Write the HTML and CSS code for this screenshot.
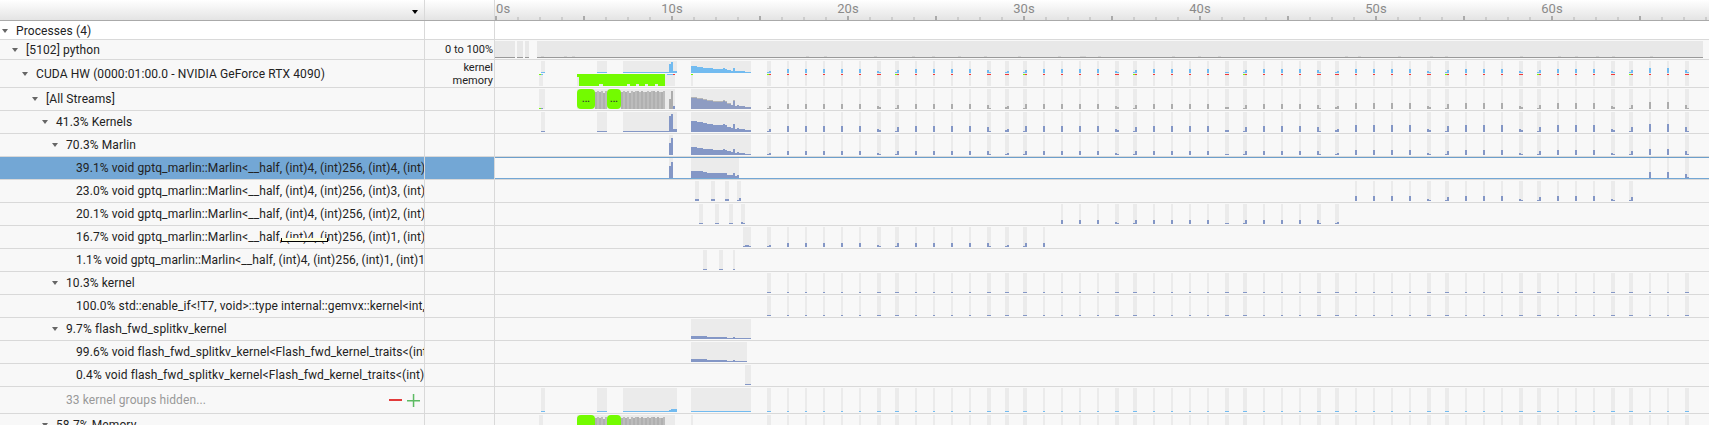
FILE: index.html
```html
<!DOCTYPE html>
<html lang="en">
<head>
  <meta charset="UTF-8">
  <title>Processes timeline</title>
  <link rel="stylesheet" href="styles.css">
</head>
<body>
<div class="header">
  <div class="name-cell"><span class="sort-arrow"></span></div>
  <div class="scale-cell"></div>
  <div class="track" id="axis"></div>
</div>

<div class="row top">
  <div class="name-cell l0"><i class="tw"></i>Processes (4)</div>
  <div class="scale-cell"></div>
  <div class="track"></div>
</div>
<div class="row h20">
  <div class="name-cell l1"><i class="tw"></i>[5102] python</div>
  <div class="scale-cell">0 to 100%</div>
  <div class="track" data-track="python"></div>
</div>
<div class="row h28">
  <div class="name-cell l2"><i class="tw"></i>CUDA HW (0000:01:00.0 - NVIDIA GeForce RTX 4090)</div>
  <div class="scale-cell">kernel<br>memory</div>
  <div class="track" data-track="cuda"></div>
</div>
<div class="row">
  <div class="name-cell l3"><i class="tw"></i>[All Streams]</div>
  <div class="scale-cell"></div>
  <div class="track" data-track="streams"></div>
</div>
<div class="row">
  <div class="name-cell l4"><i class="tw"></i>41.3% Kernels</div>
  <div class="scale-cell"></div>
  <div class="track" data-track="kernels"></div>
</div>
<div class="row">
  <div class="name-cell l5"><i class="tw"></i>70.3% Marlin</div>
  <div class="scale-cell"></div>
  <div class="track" data-track="marlin"></div>
</div>
<div class="row selected">
  <div class="name-cell l6">39.1% void gptq_marlin::Marlin&lt;__half, (int)4, (int)256, (int)4, (int)</div>
  <div class="scale-cell"></div>
  <div class="track" data-track="m4"></div>
</div>
<div class="row">
  <div class="name-cell l6">23.0% void gptq_marlin::Marlin&lt;__half, (int)4, (int)256, (int)3, (int)</div>
  <div class="scale-cell"></div>
  <div class="track" data-track="m3"></div>
</div>
<div class="row">
  <div class="name-cell l6">20.1% void gptq_marlin::Marlin&lt;__half, (int)4, (int)256, (int)2, (int)</div>
  <div class="scale-cell"></div>
  <div class="track" data-track="m2"></div>
</div>
<div class="row">
  <div class="name-cell l6">16.7% void gptq_marlin::Marlin&lt;__half, (int)4, (int)256, (int)1, (int)<span class="tooltip-sliver"></span></div>
  <div class="scale-cell"></div>
  <div class="track" data-track="m1"></div>
</div>
<div class="row">
  <div class="name-cell l6">1.1% void gptq_marlin::Marlin&lt;__half, (int)4, (int)256, (int)1, (int)1</div>
  <div class="scale-cell"></div>
  <div class="track" data-track="m0"></div>
</div>
<div class="row">
  <div class="name-cell l5"><i class="tw"></i>10.3% kernel</div>
  <div class="scale-cell"></div>
  <div class="track" data-track="thin"></div>
</div>
<div class="row">
  <div class="name-cell l6">100.0% std::enable_if&lt;!T7, void&gt;::type internal::gemvx::kernel&lt;int,</div>
  <div class="scale-cell"></div>
  <div class="track" data-track="thin"></div>
</div>
<div class="row">
  <div class="name-cell l5"><i class="tw"></i>9.7% flash_fwd_splitkv_kernel</div>
  <div class="scale-cell"></div>
  <div class="track" data-track="flash"></div>
</div>
<div class="row">
  <div class="name-cell l6">99.6% void flash_fwd_splitkv_kernel&lt;Flash_fwd_kernel_traits&lt;(int)</div>
  <div class="scale-cell"></div>
  <div class="track" data-track="flash1"></div>
</div>
<div class="row">
  <div class="name-cell l6">0.4% void flash_fwd_splitkv_kernel&lt;Flash_fwd_kernel_traits&lt;(int)1</div>
  <div class="scale-cell"></div>
  <div class="track" data-track="flash2"></div>
</div>
<div class="row h27">
  <div class="name-cell l5 hidden-groups">
    <i class="tw none"></i>33 kernel groups hidden...
    <span class="expanders">
      <svg width="13" height="2" viewBox="0 0 13 2"><rect width="13" height="2" fill="#e23a3a"/></svg>
      <svg width="13" height="13" viewBox="0 0 13 13"><path d="M0 6h13v1.500H0zM5.800 0h1.500v13H5.800z" fill="#5dbb63"/></svg>
    </span>
  </div>
  <div class="scale-cell"></div>
  <div class="track" data-track="hidden"></div>
</div>
<div class="row">
  <div class="name-cell l4"><i class="tw"></i>58.7% Memory</div>
  <div class="scale-cell"></div>
  <div class="track" data-track="memory"></div>
</div>
<script src="chart.js"></script>
</body>
</html>
```

FILE: styles.css
```css
* {
  box-sizing: border-box;
}

html, body {
  height: 100%;
}

body {
  margin: 0;
  overflow: hidden;
  background: #f8f8f8;
  color: #222;
  font: 12px Roboto, "Liberation Sans", sans-serif;
  letter-spacing: .1px;
}

.header, .row {
  display: grid;
  grid-template-columns: 425px 70px 1fr;
}

.header {
  height: 21px;
  background: linear-gradient(#fff, #e4e4e4);
  border-bottom: 1px solid #aaa;
}

.row {
  height: 23px;
  border-bottom: 1px solid #d9d9d9;
}

.row.top { height: 19px; background: #fff; }
.row.h20 { height: 20px; }
.row.h28 { height: 28px; }
.row.h27 { height: 27px; }

.row.top .name-cell { padding-top: 2px; }
.row.h20 .name-cell { padding-top: 1px; }

.name-cell, .scale-cell {
  border-right: 1px solid #d9d9d9;
}

.name-cell {
  position: relative;
  display: flex;
  align-items: center;
  padding-right: 1px;
  overflow: hidden;
  white-space: nowrap;
}

.l0 { padding-left: 2px; }
.l1 { padding-left: 12px; }
.l2 { padding-left: 22px; }
.l3 { padding-left: 32px; }
.l4 { padding-left: 42px; }
.l5 { padding-left: 52px; }
.l6 { padding-left: 76px; }

.tw {
  flex: none;
  width: 0;
  height: 0;
  margin-right: 8px;
  border: 3.5px solid transparent;
  border-top: 4px solid #666;
  border-bottom: 0;
}

.tw.none {
  border-top-color: transparent;
}

.scale-cell {
  padding-right: 1px;
  font-size: 11px;
  letter-spacing: 0;
  line-height: 13px;
  text-align: right;
  display: flex;
  flex-direction: column;
  justify-content: center;
}

.track svg {
  display: block;
}

.selected .name-cell, .selected .scale-cell {
  background: #73a7d5;
}

.selected .track {
  box-shadow: inset 0 1px #6d9fcb, inset 0 -1px #73a7d5;
}

.sort-arrow {
  position: absolute;
  left: 412px;
  top: 10px;
  border: 3.5px solid transparent;
  border-top: 4px solid #000;
  border-bottom: 0;
}

.hidden-groups {
  color: #999;
}

.expanders {
  margin-left: auto;
  padding-right: 3px;
  display: flex;
  align-items: center;
  gap: 5px;
}

.tooltip-sliver {
  position: absolute;
  left: 281px;
  top: 12px;
  width: 47px;
  height: 4px;
  background: #ffffe1;
  border: 1px solid #000;
  border-top: 0;
}

.axis-label {
  font: 13px Roboto, "Liberation Sans", sans-serif;
  fill: #8a8a8a;
}

.dots {
  font: bold 9px Roboto, "Liberation Sans", sans-serif;
  fill: #333;
}
```

FILE: chart.js
```js
// all x values below are page pixels, track starts at 495
var X0 = 495;
var WIDTH = 1214;
var SLOT = '#ebebeb', BLUE = '#72bbf0', KERNEL = '#8497c6', GREY = '#adadad', GREEN = '#73fb00', RED = '#f23a3a';

// repeating short runs: [x, left height, right height]. no right height = narrow slot
var RUNS = [
  [767, 1, 3], [787, 6], [805, 6], [823, 6], [841, 6], [859, 6], [877, 3, 2], [895, 1, 5],
  [915, 6], [933, 6], [951, 6], [969, 6], [987, 5, 1], [1005, 2, 3], [1023, 1, 6],
  [1043, 6], [1061, 6], [1079, 6], [1097, 6], [1115, 3, 2], [1133, 1, 5],
  [1153, 6], [1171, 6], [1189, 6], [1207, 6], [1225, 2, 2], [1243, 1, 5],
  [1263, 6], [1281, 6], [1299, 6], [1317, 5, 1], [1335, 2, 3],
  [1355, 7], [1373, 7], [1391, 7], [1409, 7], [1427, 3, 2], [1445, 1, 6],
  [1465, 7], [1483, 7], [1501, 7], [1519, 3, 2], [1537, 1, 5],
  [1557, 7], [1575, 7], [1593, 7], [1611, 3, 2], [1629, 1, 5],
  [1649, 8], [1667, 8], [1685, 5, 1]
];

// 30 bins of 2px for the block that starts at 691
var HIST = [11,11,11,10,10,10,9,9,8,8,8,7,7,7,7,7,8,7,5,5,4,8,3,4,3,3,3,2,2,2];
var FLASH = [3,3,3,3,3,3,3,3,2,2,2,2,2,2,2,2,2,2,1,1,1,2,1,1,1,1,1,1,1,1];
var STRIPES = [17,18,17,18,16,18,17,18,18,17,18,17,17,18,17,18,18,17,18,17,17,18];

function rect(x, y, w, h, fill) {
  if (h <= 0) return '';
  return '<rect x="' + (x - X0) + '" y="' + y + '" width="' + w + '" height="' + h + '" fill="' + fill + '"/>';
}

function runs(from, to) {
  return RUNS.filter(function (r) { return r[0] >= from && r[0] <= to; });
}

function scaled(v, k) {
  return Math.max(1, Math.round(v * k));
}

// grey slots and a small histogram per run
function runBars(list, top, bottom, k, color) {
  var s = '';
  list.forEach(function (r) {
    var wide = r.length > 2;
    s += rect(r[0], top, wide ? 4 : 2, bottom - top, SLOT);
    if (wide) {
      var a = scaled(r[1], k), b = scaled(r[2], k);
      s += rect(r[0], bottom - a, 2, a, color) + rect(r[0] + 2, bottom - b, 2, b, color);
    } else {
      var h = scaled(r[1], k);
      s += rect(r[0], bottom - h, 2, h, color);
    }
  });
  return s;
}

function slots(list, top, bottom) {
  return list.map(function (p) { return rect(p[0], top, p[1], bottom - top, SLOT); }).join('');
}

function hist(values, k, bins, bottom, color) {
  var s = '';
  for (var i = 0; i < bins; i++) {
    var h = scaled(values[i], k);
    s += rect(691 + i * 2, bottom - h, 2, h, color);
  }
  return s;
}

// the long green groups with the grey stripes next to them
function greenGroups(top, bottom) {
  var s = rect(577, top, 98, bottom - top, SLOT);
  STRIPES.forEach(function (h, i) {
    var c = i % 2 ? '#bcbcbc' : '#b0b0b0';
    if (i < 6) s += rect(595 + i * 2, bottom - h, 2, h, c);
    s += rect(621 + i * 2, bottom - h, 2, h, c);
  });
  [[577, 18], [607, 14]].forEach(function (g) {
    s += '<rect x="' + (g[0] - X0) + '" y="' + top + '" width="' + g[1] + '" height="' + (bottom - top) + '" rx="4" fill="' + GREEN + '"/>';
  });
  return s;
}

var draw = {
  python: function () {
    var s = '';
    [[495, 20], [517, 6], [525, 4], [537, 1166]].forEach(function (p) {
      s += rect(p[0], 1, p[1], 16, '#e8e8e8') + rect(p[0], 17, p[1], 1, '#999');
    });
    [541, 564, 572, 806, 824, 874, 912, 932, 958, 984, 1018, 1058, 1080, 1083, 1098, 1172, 1198, 1218, 1345, 1358, 1398, 1430, 1445, 1520, 1558, 1575, 1596, 1612, 1650].forEach(function (x) {
      s += rect(x, 16, 3, 1, '#d4d4d4');
    });
    return s;
  },
  cuda: function () {
    var s = slots([[541, 4], [597, 10], [623, 54], [691, 60]], 1, 13);
    s += slots([[539, 4], [691, 2]], 14, 26);
    s += rect(577, 14, 98, 12, SLOT);
    s += rect(541, 12, 4, 1, BLUE) + rect(597, 12, 10, 1, BLUE) + rect(623, 12, 46, 1, BLUE);
    s += rect(669, 4, 2, 9, BLUE) + rect(671, 2, 2, 11, BLUE) + rect(673, 11, 4, 2, BLUE);
    s += hist(HIST, 0.6, 30, 13, BLUE);
    s += rect(539, 14, 2, 1, GREEN) + rect(541, 14, 2, 1, BLUE) + rect(691, 14, 2, 1, GREEN);
    s += rect(667, 14, 6, 1, BLUE) + rect(673, 14, 2, 1, RED);
    // green block, bottom edge is uneven
    s += rect(577, 14, 2, 3, GREEN) + rect(579, 14, 86, 10, GREEN);
    [[579, 20], [603, 24], [630, 6], [639, 6], [648, 7], [658, 7]].forEach(function (p) {
      s += rect(p[0], 24, p[1], 2, GREEN);
    });
    RUNS.forEach(function (r) {
      var wide = r.length > 2;
      s += rect(r[0], 1, wide ? 4 : 2, 25, SLOT);
      if (wide) {
        s += rect(r[0], 13 - scaled(r[1], 0.5), 2, scaled(r[1], 0.5), BLUE);
        s += rect(r[0] + 2, 13 - scaled(r[2], 0.5), 2, scaled(r[2], 0.5), BLUE);
        s += rect(r[0], 14, 2, 1, r[1] === 1 ? GREEN : RED) + rect(r[0] + 2, 14, 2, 1, RED);
      } else {
        s += rect(r[0], 13 - scaled(r[1], 0.6), 2, scaled(r[1], 0.6), BLUE) + rect(r[0], 14, 2, 1, RED);
      }
    });
    return s;
  },
  streams: function () {
    var s = slots([[539, 6], [691, 60]], 1, 21);
    s += rect(539, 20, 2, 1, GREEN) + rect(541, 20, 2, 1, KERNEL);
    s += greenGroups(1, 21);
    s += '<text class="dots" x="' + (586 - X0) + '" y="14" text-anchor="middle">...</text>';
    s += '<text class="dots" x="' + (614 - X0) + '" y="14" text-anchor="middle">...</text>';
    s += rect(669, 11, 2, 10, GREY) + rect(671, 3, 2, 18, GREY) + rect(673, 18, 2, 3, KERNEL);
    s += hist(HIST, 1.1, 30, 21, '#b5b5b5') + hist(HIST, 1, 30, 21, '#8e9cc2');
    s += runBars(RUNS, 1, 21, 0.85, GREY);
    return s;
  },
  kernels: function () {
    var s = slots([[541, 4], [597, 10], [623, 54], [691, 60]], 1, 21);
    s += rect(541, 20, 4, 1, KERNEL) + rect(597, 20, 10, 1, KERNEL) + rect(623, 20, 46, 1, KERNEL);
    s += rect(669, 5, 2, 16, KERNEL) + rect(671, 3, 2, 18, KERNEL) + rect(673, 18, 4, 3, KERNEL);
    s += hist(HIST, 1, 30, 21, KERNEL);
    return s + runBars(RUNS, 1, 21, 1, KERNEL);
  },
  marlin: function () {
    var s = slots([[669, 4], [691, 60]], 1, 21);
    s += rect(669, 9, 2, 12, KERNEL) + rect(671, 4, 2, 17, KERNEL);
    s += hist(HIST, 0.7, 30, 21, KERNEL);
    return s + runBars(RUNS, 1, 21, 0.7, KERNEL);
  },
  m4: function () {
    var s = slots([[669, 4], [691, 48]], 1, 21);
    s += rect(669, 9, 2, 12, KERNEL) + rect(671, 5, 2, 16, KERNEL);
    s += hist(HIST, 0.65, 24, 21, KERNEL);
    return s + runBars(runs(1649, 1685), 1, 21, 0.75, KERNEL);
  },
  m3: function () {
    var s = slots([[695, 4], [711, 4], [725, 4], [737, 4]], 1, 21);
    s += rect(695, 19, 4, 2, KERNEL) + rect(711, 19, 4, 2, KERNEL) + rect(725, 19, 4, 2, KERNEL);
    s += rect(737, 20, 2, 1, KERNEL) + rect(739, 18, 2, 3, KERNEL);
    return s + runBars(runs(1355, 1629), 1, 21, 0.7, KERNEL);
  },
  m2: function () {
    var s = slots([[699, 4], [715, 4], [729, 4], [741, 4]], 1, 21);
    s += rect(699, 20, 4, 1, KERNEL) + rect(715, 20, 4, 1, KERNEL) + rect(729, 20, 4, 1, KERNEL);
    s += rect(741, 19, 2, 2, KERNEL) + rect(743, 20, 2, 1, KERNEL);
    return s + runBars(runs(1061, 1335), 1, 21, 0.7, KERNEL);
  },
  m1: function () {
    var s = slots([[743, 8]], 1, 21);
    s += rect(743, 20, 2, 1, KERNEL) + rect(745, 19, 4, 2, KERNEL) + rect(749, 20, 2, 1, KERNEL);
    return s + runBars(runs(767, 1043), 1, 21, 0.7, KERNEL);
  },
  m0: function () {
    var s = slots([[703, 4], [719, 4], [733, 2]], 1, 21);
    return s + rect(703, 20, 4, 1, KERNEL) + rect(719, 20, 4, 1, KERNEL) + rect(733, 20, 2, 1, KERNEL);
  },
  thin: function () {
    return runBars(RUNS, 1, 21, 0.1, KERNEL);
  },
  flash: function () {
    return slots([[691, 60]], 1, 21) + hist(FLASH, 1, 30, 21, KERNEL);
  },
  flash1: function () {
    return slots([[691, 56]], 1, 21) + hist(FLASH, 1, 28, 21, KERNEL);
  },
  flash2: function () {
    return slots([[745, 6]], 1, 21) + rect(745, 20, 6, 1, KERNEL);
  },
  hidden: function () {
    var s = slots([[541, 4], [597, 10], [623, 54], [691, 60]], 1, 25);
    s += rect(541, 24, 4, 1, BLUE) + rect(597, 24, 10, 1, BLUE) + rect(623, 24, 54, 1, BLUE);
    s += rect(669, 23, 2, 1, BLUE) + rect(671, 22, 6, 2, BLUE) + rect(691, 24, 60, 1, BLUE);
    return s + runBars(RUNS, 1, 25, 0.1, BLUE);
  },
  memory: function () {
    var s = slots([[539, 4], [691, 2]], 1, 21);
    s += greenGroups(1, 21);
    return s + runBars(RUNS, 1, 21, 0.1, GREY);
  }
};

function axis() {
  var s = '';
  for (var i = 0; X0 + i * 22 < X0 + WIDTH; i++) {
    var major = i % 4 === 0;
    s += rect(X0 + Math.round(i * 22), major ? 16 : 17, 2, major ? 4 : 3, major ? '#aaa' : '#ccc');
  }
  for (var t = 0; t <= 60; t += 10) {
    var x = t * 17.6;
    s += '<text class="axis-label" x="' + (t ? x + 1 : 1) + '" y="13" text-anchor="' + (t ? 'middle' : 'start') + '">' + t + 's</text>';
  }
  return s;
}

function svg(inner, h) {
  return '<svg width="' + WIDTH + '" height="' + h + '">' + inner + '</svg>';
}

document.getElementById('axis').innerHTML = svg(axis(), 20);
document.querySelectorAll('[data-track]').forEach(function (el) {
  el.innerHTML = svg(draw[el.dataset.track](), el.parentNode.clientHeight);
});
```
